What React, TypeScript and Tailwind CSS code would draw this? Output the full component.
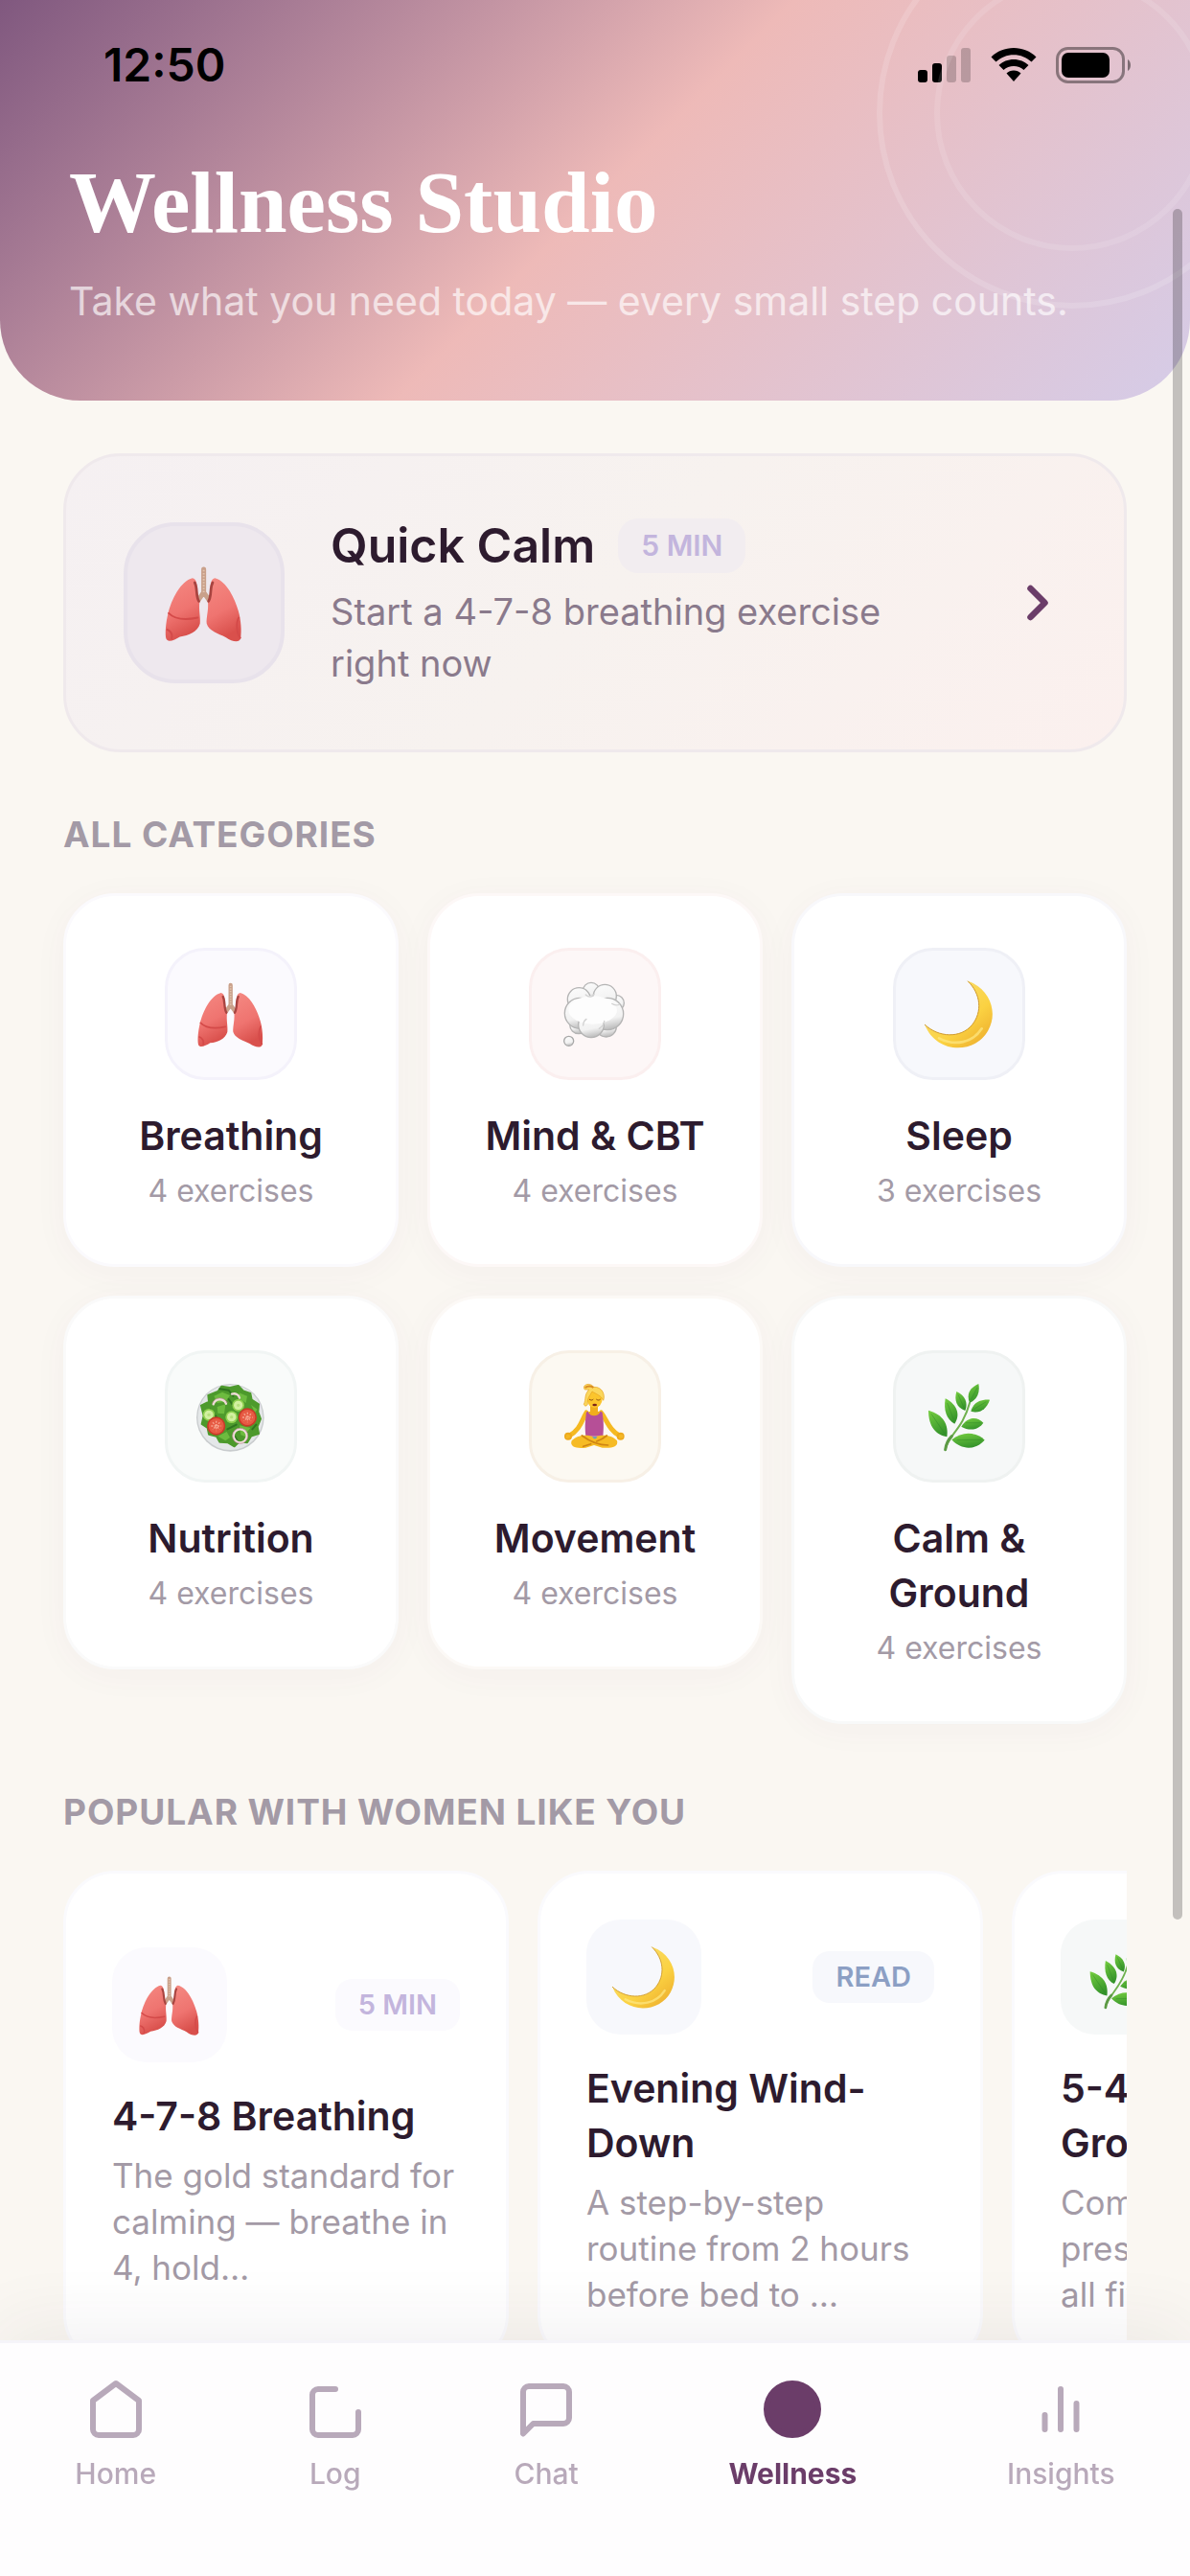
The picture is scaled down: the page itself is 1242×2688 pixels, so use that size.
import type { ReactNode } from 'react';
import { ChevronRight } from 'lucide-react';

type ArtName = 'lungs' | 'thought' | 'moon' | 'salad' | 'yoga' | 'leaf';

const CATEGORIES: { name: string; count: number; art: ArtName; card: string; tile: string }[] = [
  { name: 'Breathing', count: 4, art: 'lungs', card: 'border-[#fbfafd]', tile: 'bg-[#fbfafe] border-[#f4f2fb]' },
  { name: 'Mind & CBT', count: 4, art: 'thought', card: 'border-[#fdf8f7]', tile: 'bg-[#fdf7f7] border-[#fbefef]' },
  { name: 'Sleep', count: 3, art: 'moon', card: 'border-[#f8f8fb]', tile: 'bg-[#f7f8fc] border-[#eff0f6]' },
  { name: 'Nutrition', count: 4, art: 'salad', card: 'border-[#fafafa]', tile: 'bg-[#f9fbfa] border-[#f1f5f4]' },
  { name: 'Movement', count: 4, art: 'yoga', card: 'border-[#fcf9f6]', tile: 'bg-[#fcf9f2] border-[#f7f0e6]' },
  { name: 'Calm & Ground', count: 4, art: 'leaf', card: 'border-[#f8f9f9]', tile: 'bg-[#f6f8f8] border-[#eff2f1]' },
];

const POPULAR: { title: string; text: string; tag: string; art: ArtName; tile: string; badge: string }[] = [
  {
    title: '4-7-8 Breathing',
    text: 'The gold standard for calming — breathe in 4, hold…',
    tag: '5 MIN',
    art: 'lungs',
    tile: 'bg-[#fbfafe]',
    badge: 'bg-[#fbfafe] text-[#c3b5dd]',
  },
  {
    title: 'Evening Wind-Down',
    text: 'A step-by-step routine from 2 hours before bed to …',
    tag: 'READ',
    art: 'moon',
    tile: 'bg-[#f7f8fc]',
    badge: 'bg-[#f7f8fc] text-[#8c9fc4]',
  },
  {
    title: '5-4-3-2-1 Grounding',
    text: 'Come back to the present moment with all five senses…',
    tag: '5 MIN',
    art: 'leaf',
    tile: 'bg-[#f6f8f8]',
    badge: 'bg-[#f6f8f8] text-[#8fae9b]',
  },
];

const LEAVES = [
  'M57 131C58 185 80 206 115 214C120 175 105 145 57 131Z',
  'M110 94C104 130 113 160 139 173C156 148 151 115 110 94Z',
  'M145 72C137 100 145 122 172 132C182 108 172 85 145 72Z',
  'M214 48C184 62 176 82 186 108C210 96 219 76 214 48Z',
  'M249 98C218 96 197 108 190 134C218 142 238 128 249 98Z',
  'M229 170C210 150 180 150 160 182C185 196 212 194 229 170Z',
  'M233 224C205 197 162 196 130 223C160 256 205 256 233 224Z',
];

function LungsArt() {
  return (
    <>
      <defs>
        <linearGradient id="lung" x1="0" y1="0" x2="0.3" y2="1">
          <stop offset="0" stopColor="#f58a83" />
          <stop offset="0.6" stopColor="#ef7470" />
          <stop offset="1" stopColor="#d9504c" />
        </linearGradient>
      </defs>
      <path d="M152 60V128M152 122L138 142M152 122L166 142" fill="none" stroke="#c9a08a" strokeWidth="13" strokeLinecap="round" />
      <path d="M152 62V124" stroke="#e2c3ae" strokeWidth="5" strokeDasharray="4 4" />
      <path d="M122 84C90 92 66 140 56 180C50 205 48 232 51 246C55 258 74 250 88 241C112 238 136 228 142 206C144 188 138 170 141 146C128 130 142 88 122 84Z" fill="url(#lung)" />
      <path d="M182 84C162 88 176 130 163 146C166 170 158 190 160 206C166 226 190 232 212 243C228 255 248 258 251 246C254 225 252 195 245 172C236 140 214 92 182 84Z" fill="url(#lung)" />
      <path d="M58 178C78 198 108 196 136 190M66 246C70 232 60 224 54 222M246 190C238 204 240 232 250 244" fill="none" stroke="#d44a49" strokeWidth="5" strokeLinecap="round" />
      <path d="M128 96C136 110 130 130 139 146M176 96C168 110 174 130 165 146" fill="none" stroke="#a84440" strokeWidth="7" strokeLinecap="round" />
    </>
  );
}

const PUFFS = [
  [141, 78, 26], [219, 116, 25], [102, 184, 28], [188, 190, 32],
  [103, 104, 36], [184, 94, 36], [106, 148, 48], [192, 150, 50], [141, 184, 40],
];

function ThoughtArt() {
  return (
    <>
      <defs>
        <linearGradient id="puff" x1="0.4" y1="0" x2="0.6" y2="1">
          <stop offset="0" stopColor="#fbfbfb" />
          <stop offset="0.65" stopColor="#f2f2f2" />
          <stop offset="1" stopColor="#b8b8b8" />
        </linearGradient>
      </defs>
      {PUFFS.map(([x, y, r]) => (
        <circle key={`${x}-${y}`} cx={x} cy={y} r={r} fill="url(#puff)" stroke="#b4b4b4" strokeWidth="4" />
      ))}
      <ellipse cx="146" cy="138" rx="76" ry="44" fill="#fdfdfd" />
      <path d="M124 90C134 100 146 98 150 88M206 118C214 124 222 124 230 120M116 186C116 178 120 170 126 166M166 196C176 190 182 180 182 172" fill="none" stroke="#d2d2d2" strokeWidth="4" strokeLinecap="round" />
      <circle cx="71" cy="235" r="15" fill="url(#puff)" stroke="#a8a8a8" strokeWidth="4" />
    </>
  );
}

function MoonArt() {
  return (
    <>
      <defs>
        <linearGradient id="moon" x1="0.2" y1="0.2" x2="0.9" y2="1">
          <stop offset="0" stopColor="#f9dc6a" />
          <stop offset="0.55" stopColor="#fbd242" />
          <stop offset="1" stopColor="#ecab2c" />
        </linearGradient>
      </defs>
      <path d="M180 47C250 70 276 145 244 202C206 274 84 280 45 183C88 224 158 228 194 184C226 144 222 88 180 47Z" fill="url(#moon)" />
      <path d="M45 183C88 224 158 228 194 184C226 144 222 88 180 47" fill="none" stroke="#d09a2e" strokeWidth="3" />
      <path d="M90 226C140 252 196 240 224 196" fill="none" stroke="#fde884" strokeWidth="8" strokeLinecap="round" opacity="0.7" />
    </>
  );
}

function SaladArt() {
  return (
    <>
      <circle cx="151" cy="154" r="106" fill="#c9ccce" />
      <circle cx="151" cy="153" r="102" fill="#e4e7e8" />
      <path d="M60 116L84 104L82 84L112 72L124 56L150 60L176 54L192 70L214 78L218 98L240 112L238 136L246 158L236 182L240 204L216 212L204 232L180 228L164 244L144 232L118 230L108 212L84 206L80 186L62 174L68 148Z" fill="#4d9a2c" strokeLinejoin="round" stroke="#4d9a2c" strokeWidth="6" />
      <path d="M100 86L126 74L150 84L136 104L110 108ZM178 76L204 86L200 108L182 96ZM110 120L136 112L132 142L112 140ZM180 178L214 186L200 204L206 216L184 208ZM112 212L140 198L150 216L136 226ZM216 114L236 128L228 138Z" fill="#6dbb3f" />
      <path d="M118 64L146 68L160 86M88 128L108 152M142 190L170 176M166 214L176 232M146 96L160 116M220 190L232 176" fill="none" stroke="#2f7420" strokeWidth="6" strokeLinecap="round" />
      {[[84, 145], [155, 152], [176, 115]].map(([x, y]) => (
        <g key={x}>
          <circle cx={x} cy={y} r="19" fill="#8fd04f" />
          <circle cx={x} cy={y} r="14" fill="#d2f0a0" />
          <circle cx={x} cy={y} r="5" fill="#b6e07c" />
        </g>
      ))}
      {[[107, 180], [205, 153]].map(([x, y]) => (
        <g key={x}>
          <circle cx={x} cy={y} r="29" fill="#c93a28" />
          <circle cx={x} cy={y} r="24" fill="#e65a43" />
          <path d={`M${x - 16} ${y}h32M${x} ${y - 16}v32M${x - 11} ${y - 11}l22 22M${x + 11} ${y - 11}l-22 22`} stroke="#f6a48e" strokeWidth="4" strokeDasharray="6 4" />
        </g>
      ))}
      <circle cx="182" cy="211" r="21" fill="none" stroke="#f1dfdc" strokeWidth="7" />
      <circle cx="182" cy="211" r="24" fill="none" stroke="#b5838f" strokeWidth="2" />
      <path d="M98 112C104 92 130 92 138 110M156 80C168 76 178 82 180 92" fill="none" stroke="#eedbd6" strokeWidth="7" strokeLinecap="round" />
      <path d="M94 110C102 86 134 88 142 108" fill="none" stroke="#b5838f" strokeWidth="2" />
    </>
  );
}

function YogaArt() {
  return (
    <>
      <path d="M126 138C112 160 108 192 70 212M172 138C190 160 196 192 232 212" fill="none" stroke="#f5b921" strokeWidth="15" strokeLinecap="round" strokeLinejoin="round" />
      <circle cx="69" cy="212" r="9" fill="none" stroke="#eda91c" strokeWidth="6" />
      <circle cx="233" cy="212" r="9" fill="none" stroke="#eda91c" strokeWidth="6" />
      <path d="M138 112H162V134L178 140L170 160H130L122 140L138 134Z" fill="#f0ae1d" />
      <path d="M131 134C136 152 164 152 170 134L176 137C178 156 182 172 178 212H124C120 172 124 156 126 137Z" fill="#b64f97" />
      <path d="M80 226C100 206 128 206 150 214C174 206 204 206 222 226C228 248 200 250 176 248L150 240L124 248C98 252 72 246 80 226Z" fill="#f6bb25" />
      <path d="M112 210C136 228 166 240 194 240M190 210C176 222 164 226 158 228M140 236L116 244" fill="none" stroke="#cf8514" strokeWidth="5" strokeLinecap="round" />
      <path d="M144 214H160L156 220H150Z" fill="#5a9fd0" />
      <ellipse cx="152" cy="94" rx="24" ry="29" fill="#fbc52d" />
      <path d="M121 66C110 50 138 42 149 58C176 56 186 84 179 100C172 84 156 80 144 72C136 88 128 92 130 112C126 120 120 118 118 112C126 96 118 84 134 66Z" fill="#fbd75c" stroke="#e5a01c" strokeWidth="2" />
      <path d="M122 60C130 54 142 54 148 60" fill="none" stroke="#d88b23" strokeWidth="6" />
      <path d="M136 97C140 100 144 100 147 97M158 97C162 100 166 100 169 97" fill="none" stroke="#8a4b10" strokeWidth="3" strokeLinecap="round" />
      <ellipse cx="152" cy="114" rx="7" ry="4" fill="#7c2417" />
    </>
  );
}

function LeafArt() {
  return (
    <>
      <defs>
        <linearGradient id="leaf" x1="0.2" y1="0" x2="0.6" y2="1">
          <stop offset="0" stopColor="#72cb3f" />
          <stop offset="1" stopColor="#32912a" />
        </linearGradient>
      </defs>
      <path d="M110 254C118 210 164 190 186 108" fill="none" stroke="#6fb14e" strokeWidth="6" strokeLinecap="round" />
      <path d="M110 254C112 236 120 222 130 212" fill="none" stroke="#5c9a45" strokeWidth="9" strokeLinecap="round" />
      {LEAVES.map(d => <path key={d} d={d} fill="url(#leaf)" />)}
      <path d="M66 142L108 204M116 108L136 160M150 82L168 122M210 60L190 98M238 104L198 128M220 170H174M224 223L146 224" stroke="#2c8427" strokeWidth="2" opacity="0.6" />
    </>
  );
}

const ART: Record<ArtName, () => ReactNode> = {
  lungs: LungsArt,
  thought: ThoughtArt,
  moon: MoonArt,
  salad: SaladArt,
  yoga: YogaArt,
  leaf: LeafArt,
};

function Art({ name, className }: { name: ArtName; className: string }) {
  const Drawing = ART[name];
  return (
    <svg viewBox="45 42 216 216" className={`${className} overflow-visible`} aria-hidden="true">
      <Drawing />
    </svg>
  );
}

function StatusBar() {
  return (
    <div className="flex h-[136px] items-center justify-between pr-[60px] pl-[108px] text-black">
      <span className="text-[48px] leading-none font-semibold">12:50</span>
      <div className="flex items-center gap-5">
        <svg className="h-9 w-14" viewBox="0 0 56 36" aria-hidden="true">
          <rect x="0" y="23" width="10" height="13" rx="3" />
          <rect x="15" y="16" width="10" height="20" rx="3" />
          <rect x="30" y="8" width="10" height="28" rx="3" opacity="0.2" />
          <rect x="45" y="0" width="10" height="36" rx="3" opacity="0.2" />
        </svg>
        <svg className="h-9 w-12" viewBox="0 0 48 36" aria-hidden="true">
          <path d="M24 0C15 0 6.500 3.500 0.500 9.500L5.500 14.500C10.500 9.800 17 7.200 24 7.200S37.500 9.800 42.500 14.500L47.500 9.500C41.500 3.500 33 0 24 0Z" />
          <path d="M24 12C18 12 12.500 14.300 8.500 18L13.500 23C16.300 20.500 20 19 24 19S31.700 20.500 34.500 23L39.500 18C35.500 14.300 30 12 24 12Z" />
          <path d="M24 23.500C21 23.500 18.500 24.600 16.500 26.500L24 35L31.500 26.500C29.500 24.600 27 23.500 24 23.500Z" />
        </svg>
        <svg className="h-[38px] w-20" viewBox="0 0 80 38" aria-hidden="true">
          <rect x="1.500" y="1.500" width="69" height="35" rx="11" fill="none" stroke="#000" strokeOpacity="0.4" strokeWidth="3" />
          <rect x="6" y="6" width="50" height="26" rx="7" />
          <path d="M75 13C79 15 79 23 75 25Z" opacity="0.45" />
        </svg>
      </div>
    </div>
  );
}

function SectionTitle({ children }: { children: ReactNode }) {
  return <h2 className="text-[37px] leading-[54px] font-bold tracking-wide text-[#a39aa6] uppercase">{children}</h2>;
}

const TABS: { label: string; icon: ReactNode; active?: boolean }[] = [
  { label: 'Home', icon: <path d="M4 9l8-6 8 6v10a2 2 0 0 1-2 2H6a2 2 0 0 1-2-2z" /> },
  { label: 'Log', icon: <path d="M12 5H6a2 2 0 0 0-2 2v12a2 2 0 0 0 2 2h12a2 2 0 0 0 2-2v-6" /> },
  { label: 'Chat', icon: <path d="M4 20.500V6a2 2 0 0 1 2-2h12a2 2 0 0 1 2 2v9a2 2 0 0 1-2 2H7.500z" /> },
  { label: 'Wellness', icon: <circle cx="12" cy="12" r="9" fill="currentColor" />, active: true },
  { label: 'Insights', icon: <path d="M6.500 14v5M12 5v14M17.500 10v9" /> },
];

function TabBar() {
  return (
    <nav className="fixed inset-x-0 bottom-0 flex justify-around border-t-[3px] border-[#f5f4f9] bg-[#fefdfe] pt-[39px] pb-[84px] shadow-[0_-12px_72px_rgba(60,40,60,0.07)]">
      {TABS.map(tab => (
        <a
          key={tab.label}
          href="#"
          aria-current={tab.active ? 'page' : undefined}
          className={`flex flex-col items-center gap-[15px] text-[30px] leading-[45px] ${tab.active ? 'font-bold text-[#6b3d69]' : 'font-medium text-[#b8a9ba]'}`}
        >
          <svg viewBox="2 2 20 20" className="size-[60px] overflow-visible fill-none stroke-current stroke-2" strokeLinecap="round" strokeLinejoin="round" aria-hidden="true">
            {tab.icon}
          </svg>
          {tab.label}
        </a>
      ))}
    </nav>
  );
}

export default function App() {
  return (
    <div className="relative min-h-screen overflow-x-hidden bg-[#faf7f2] pb-48 font-['Inter','Liberation_Sans',sans-serif] text-[#2d1b2e]">
      {/* Header */}
      <header className="relative overflow-hidden rounded-b-[84px] bg-linear-135 from-[#80587f] via-[#eebab8] to-[#d5cce8] pb-[74px]">
        <svg className="absolute top-0 right-0 h-[330px] w-[336px]" viewBox="0 0 336 330" fill="none" stroke="#fff" strokeWidth="6" aria-hidden="true">
          <circle cx="213" cy="118" r="201" opacity="0.15" />
          <circle cx="213" cy="118" r="141" opacity="0.12" />
        </svg>
        <StatusBar />
        <div className="relative px-[72px] pt-[22px]">
          <h1 className="font-['Liberation_Serif',serif] text-[91px] leading-[108px] font-bold text-white">Wellness Studio</h1>
          <p className="mt-[18px] text-[41px] leading-[60px] text-white/65">Take what you need today — every small step counts.</p>
        </div>
      </header>

      <main className="px-[66px] pt-[55px]">
        {/* Quick start */}
        <button className="flex w-full items-center gap-12 rounded-[60px] border-[3px] border-[#efe9ec] bg-linear-135 from-[#f5f0f2] via-[#f7f2ef] to-[#fbf0ee] px-[60px] py-[63px] text-left">
          <span className="flex size-[168px] shrink-0 items-center justify-center rounded-[54px] border-4 border-[#e8e2eb] bg-[#eee8ee]">
            <Art name="lungs" className="size-[84px]" />
          </span>
          <span className="flex-1">
            <span className="flex h-[60px] items-center gap-6">
              <span className="text-[50px] leading-[60px] font-semibold">Quick Calm</span>
              <span className="rounded-[21px] bg-[#f2edf0] px-6 py-[6px] text-[30px] leading-[45px] font-semibold text-[#c3b5dd]">5 MIN</span>
            </span>
            <span className="mt-3 block text-[38px] leading-[54px] text-[#8a7a8c]">Start a 4-7-8 breathing exercise right now</span>
          </span>
          <ChevronRight className="size-[60px] shrink-0 text-[#6b3d69]" strokeWidth={2.6} />
        </button>

        {/* Categories */}
        <section className="mt-[59px]">
          <SectionTitle>All categories</SectionTitle>
          <div className="mt-[34px] grid grid-cols-3 items-start gap-[30px]">
            {CATEGORIES.map(c => (
              <button
                key={c.name}
                className={`flex flex-col items-center rounded-[54px] border-[3px] bg-white px-9 pt-[54px] pb-[54px] shadow-[0_6px_36px_rgba(107,61,105,0.04)] ${c.card}`}
              >
                <span className={`flex size-[138px] items-center justify-center rounded-[42px] border-[3px] ${c.tile}`}>
                  <Art name={c.art} className="size-[72px]" />
                </span>
                <span className="mt-[30px] px-3 text-[41px] leading-[57px] font-semibold">{c.name}</span>
                <span className="mt-[6px] text-[32px] leading-[45px] text-[#a39aa6]">{c.count} exercises</span>
              </button>
            ))}
          </div>
        </section>

        {/* Popular */}
        <section className="mt-[65px]">
          <SectionTitle>Popular with women like you</SectionTitle>
          <div className="mt-[34px] flex gap-[30px] overflow-hidden">
            {POPULAR.map(p => (
              <button
                key={p.title}
                className="flex w-[465px] shrink-0 flex-col justify-center rounded-[54px] border-[3px] border-[#fafafd] bg-white p-12 text-left"
              >
                <span className="flex w-full items-center justify-between">
                  <span className={`flex size-[120px] items-center justify-center rounded-[36px] ${p.tile}`}>
                    <Art name={p.art} className="size-[66px]" />
                  </span>
                  <span className={`rounded-[18px] px-6 text-[29px] leading-[54px] font-semibold ${p.badge}`}>{p.tag}</span>
                </span>
                <span className="mt-7 text-[41px] leading-[57px] font-semibold">{p.title}</span>
                <span className="mt-[9px] text-[35px] leading-[48px] text-[#a39aa6]">{p.text}</span>
              </button>
            ))}
          </div>
        </section>
      </main>

      <TabBar />

      {/* Scroll indicator */}
      <div className="absolute top-[218px] right-2 h-[1785px] w-[10px] rounded-full bg-black/22" />
    </div>
  );
}
